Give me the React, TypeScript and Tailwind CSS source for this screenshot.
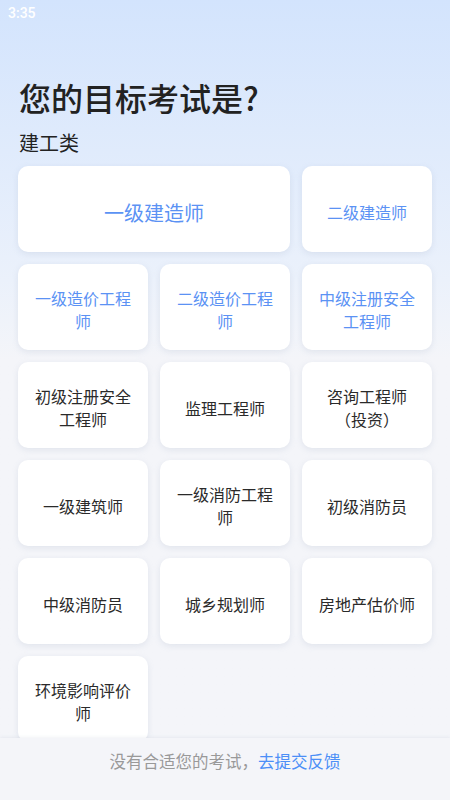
import React from 'react';

const exams = [
  { name: '一级建造师', active: true, wide: true },
  { name: '二级建造师', active: true },
  { name: '一级造价工程师', active: true },
  { name: '二级造价工程师', active: true },
  { name: '中级注册安全工程师', active: true },
  { name: '初级注册安全工程师' },
  { name: '监理工程师' },
  { name: '咨询工程师（投资）' },
  { name: '一级建筑师' },
  { name: '一级消防工程师' },
  { name: '初级消防员' },
  { name: '中级消防员' },
  { name: '城乡规划师' },
  { name: '房地产估价师' },
  { name: '环境影响评价师' },
];

export default function App() {
  return (
    <div
      className="relative w-[450px] h-[800px] overflow-hidden bg-gradient-to-b from-[#d3e4fd] via-[#ebf1fb] via-[35%] to-[#f4f5f9] to-[45%]"
      style={{ fontFamily: '"Noto Sans CJK SC", "Noto Sans", sans-serif' }}
    >
      <div className="h-[26px] px-2 pt-[3px] text-[14px] text-white font-medium" style={{ fontFamily: 'Roboto, "Noto Sans CJK SC", sans-serif' }}>
        3:35
      </div>

      <div className="px-[19px] pt-[47px]">
        <h1 className="text-[32px] leading-[48px] font-medium text-[#222]">您的目标考试是?</h1>
        <h2 className="mt-[7px] text-[20px] leading-[30px] text-[#222]">建工类</h2>
      </div>

      <div className="grid grid-cols-3 gap-x-[12px] gap-y-[12px] px-[18px] mt-[8px]">
        {exams.map((e) => (
          <div
            key={e.name}
            className={`${e.wide ? 'col-span-2' : ''} h-[86px] rounded-[10px] bg-white shadow-[0_2px_6px_rgba(140,155,185,0.18)] flex items-center justify-center px-[16px] pt-[6px] text-center`}
          >
            <span
              className={`${e.wide ? 'text-[20px]' : 'text-[16px]'} leading-[23px] ${e.active ? 'text-[#5b92f4]' : 'text-[#2a2a2a]'}`}
            >
              {e.name}
            </span>
          </div>
        ))}
      </div>

      <div className="absolute bottom-0 left-0 right-0 h-[62px] bg-[#f4f5f9] shadow-[0_-1px_3px_rgba(140,155,185,0.12)] flex justify-center pt-[11px] text-[16.5px]">
        <span className="text-[#999]">没有合适您的考试，</span>
        <span className="text-[#4c8ff7]">去提交反馈</span>
      </div>
    </div>
  );
}
